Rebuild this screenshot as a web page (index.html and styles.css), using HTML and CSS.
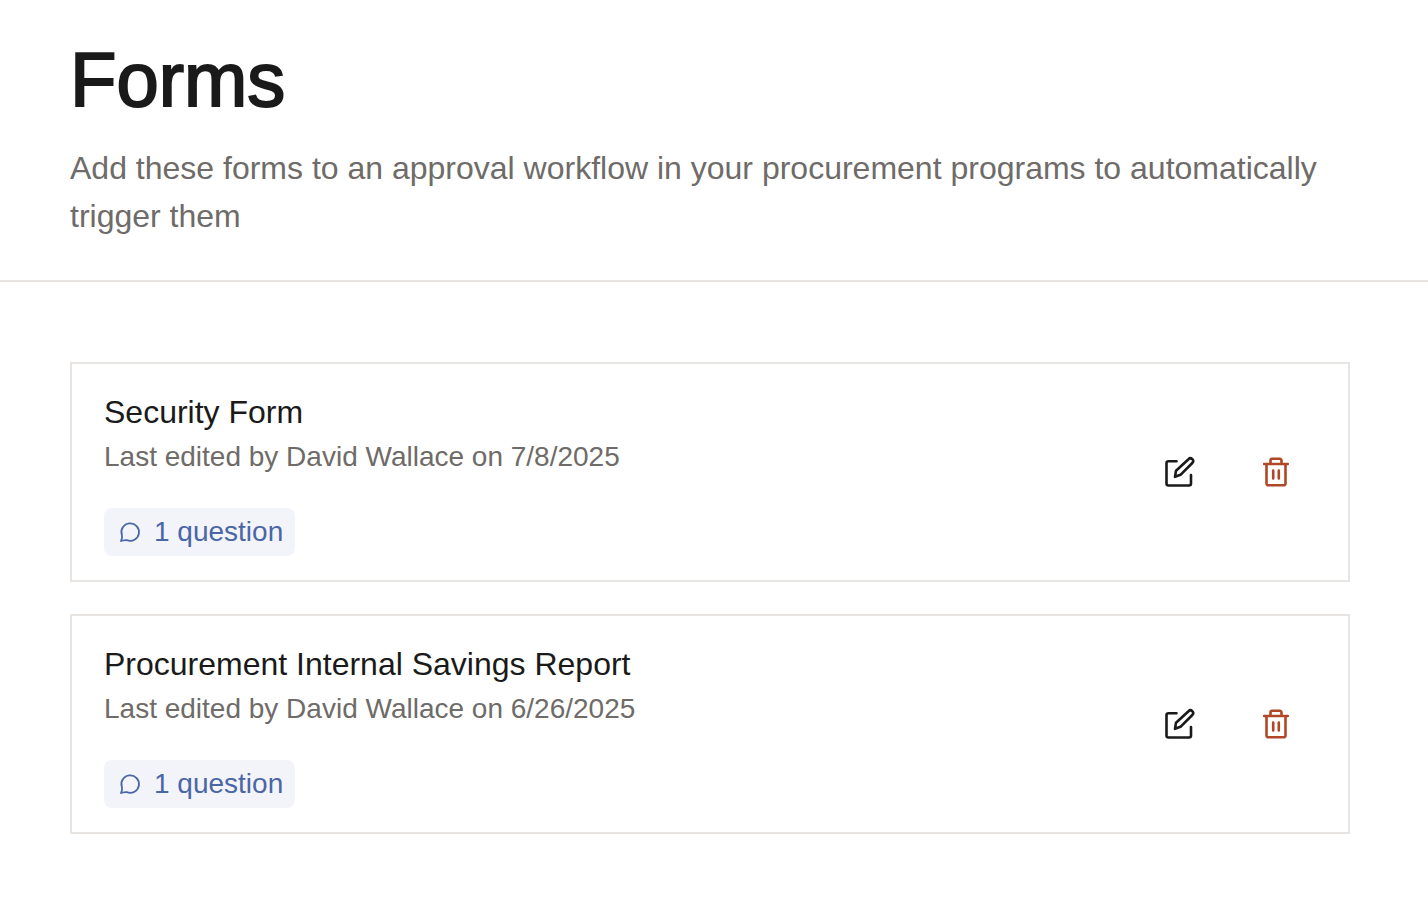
FILE: index.html
```html
<!DOCTYPE html>
<html lang="en">
<head>
<meta charset="utf-8">
<meta name="viewport" content="width=device-width, initial-scale=1">
<title>Forms</title>
<link rel="stylesheet" href="styles.css">
</head>
<body>
<svg class="sprite" aria-hidden="true">
  <symbol id="edit" viewBox="0 0 32 32"><path d="M12.500 5.200H4.500a2 2 0 0 0-2 2V27.500a2 2 0 0 0 2 2h20.500a2 2 0 0 0 2-2V19"/><path d="M24.500 3.200a2.600 2.600 0 0 1 3.800 3.800L16.500 18.800 11 20.800l1-6z"/></symbol>
  <symbol id="trash" viewBox="0 0 32 32"><path d="M4.200 8h23.600M10.500 8V4.500a1.700 1.700 0 0 1 1.700-1.700h7.600a1.700 1.700 0 0 1 1.700 1.700V8M6.500 8v19.500a1.800 1.800 0 0 0 1.800 1.800h15.400a1.800 1.800 0 0 0 1.800-1.800V8M13.200 14.500v8M18.800 14.500v8"/></symbol>
  <symbol id="chat" viewBox="0 0 24 24"><path d="M3 21c1.400-2.400 1.300-4.200.9-6A8.800 8.800 0 1 1 8.800 20.200c-1.800-.6-3.500.4-5.800.8z"/></symbol>
</svg>
<header class="page-header">
  <h1 class="page-title">Forms</h1>
  <p class="page-description">Add these forms to an approval workflow in your procurement programs to automatically trigger them</p>
</header>
<main class="form-list">
  <article class="form-card">
    <div class="form-info">
      <h2 class="form-name">Security Form</h2>
      <p class="form-meta">Last edited by David Wallace on 7/8/2025</p>
      <span class="badge"><svg class="badge-icon" aria-hidden="true"><use href="#chat"/></svg>1 question</span>
    </div>
    <div class="actions">
      <button class="icon-button" type="button" aria-label="Edit Security Form"><svg class="icon"><use href="#edit"/></svg></button>
      <button class="icon-button danger" type="button" aria-label="Delete Security Form"><svg class="icon"><use href="#trash"/></svg></button>
    </div>
  </article>
  <article class="form-card">
    <div class="form-info">
      <h2 class="form-name">Procurement Internal Savings Report</h2>
      <p class="form-meta">Last edited by David Wallace on 6/26/2025</p>
      <span class="badge"><svg class="badge-icon" aria-hidden="true"><use href="#chat"/></svg>1 question</span>
    </div>
    <div class="actions">
      <button class="icon-button" type="button" aria-label="Edit Procurement Internal Savings Report"><svg class="icon"><use href="#edit"/></svg></button>
      <button class="icon-button danger" type="button" aria-label="Delete Procurement Internal Savings Report"><svg class="icon"><use href="#trash"/></svg></button>
    </div>
  </article>
</main>
</body>
</html>
```

FILE: styles.css
```css
* { box-sizing: border-box; }
body { margin: 0; background: #fff; color: #1a1a1a; font-family: "Liberation Sans", Arial, sans-serif; }
h1, h2, p { margin: 0; font-weight: 400; }
.sprite { display: none; }
.page-header { padding: 32px 70px 40px; border-bottom: 2px solid #e7e4e2; }
.page-title { font-size: 76px; line-height: 96px; -webkit-text-stroke: 2px currentColor; }
.page-description { margin-top: 16px; font-size: 32px; line-height: 48px; color: #6e6b68; }
.form-list { display: grid; gap: 32px; padding: 80px 78px 80px 70px; }
.form-card { display: flex; align-items: center; justify-content: space-between; padding: 24px 32px; border: 2px solid #e7e4e2; }
.form-name { font-size: 32px; line-height: 48px; }
.form-meta { font-size: 28px; line-height: 42px; color: #6e6b68; }
.badge { display: inline-flex; align-items: center; gap: 12px; height: 48px; margin-top: 30px; padding: 0 12px 0 14px; border-radius: 8px; background: #f3f4f9; color: #4a66a6; font-size: 28px; }
.badge-icon { width: 24px; height: 24px; fill: none; stroke: currentColor; stroke-width: 1.8; stroke-linejoin: round; }
.actions { display: flex; gap: 32px; padding-right: 8px; }
.icon-button { display: grid; place-items: center; width: 64px; height: 64px; padding: 0; border: 0; background: none; color: #1a1a1a; cursor: pointer; }
.danger { color: #b04727; }
.icon { width: 32px; height: 32px; fill: none; stroke: currentColor; stroke-width: 2.6; stroke-linecap: round; stroke-linejoin: round; }
```
